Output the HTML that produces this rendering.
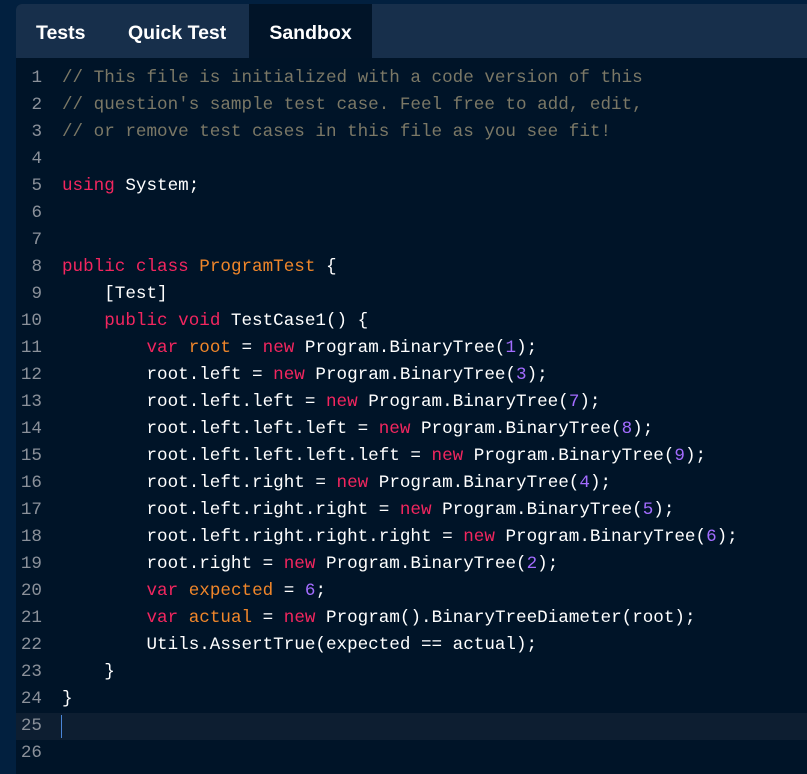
<!DOCTYPE html>
<html><head><style>
html,body{margin:0;padding:0;background:#02203f;width:807px;height:762px;overflow:hidden}
.panel{position:absolute;left:16px;top:4px;width:800px;height:770px;background:#001428;border-radius:6px 0 0 0;overflow:hidden}
.tabs{height:54px;background:#172f4b;position:relative;font-family:"Liberation Sans",sans-serif;font-weight:bold;font-size:19.5px;color:#fff}
.tab{position:absolute;top:2px;height:54px;line-height:54px}
.act{background:#011428;top:0;height:54px;line-height:58px;overflow:hidden}
.code{position:absolute;top:61px;left:0;right:0;font-family:"Liberation Mono",monospace;font-size:17.6px;color:#fff}
.ln{height:27px;line-height:27px;white-space:pre;position:relative}
.n{position:absolute;left:0;width:26px;text-align:right;color:#8b919a}
.t{position:absolute;left:46px}
.cur{background:#0d1e31}
.c{color:#7b7866}.k{color:#f2265f}.o{color:#f0862a}.m{color:#a36cff}
</style></head><body>
<div class="panel">
<div class="tabs">
<div class="tab" style="left:20px">Tests</div>
<div class="tab" style="left:112px">Quick Test</div>
<div class="tab act" style="left:233px;width:123px;text-align:center">Sandbox</div>
</div>
<div class="code">
<div class="ln"><span class="n">1</span><span class="t c">// This file is initialized with a code version of this</span></div>
<div class="ln"><span class="n">2</span><span class="t c">// question's sample test case. Feel free to add, edit,</span></div>
<div class="ln"><span class="n">3</span><span class="t c">// or remove test cases in this file as you see fit!</span></div>
<div class="ln"><span class="n">4</span></div>
<div class="ln"><span class="n">5</span><span class="t"><span class="k">using</span> System;</span></div>
<div class="ln"><span class="n">6</span></div>
<div class="ln"><span class="n">7</span></div>
<div class="ln"><span class="n">8</span><span class="t"><span class="k">public class</span> <span class="o">ProgramTest</span> {</span></div>
<div class="ln"><span class="n">9</span><span class="t">    [Test]</span></div>
<div class="ln"><span class="n">10</span><span class="t">    <span class="k">public void</span> TestCase1() {</span></div>
<div class="ln"><span class="n">11</span><span class="t">        <span class="k">var</span> <span class="o">root</span> = <span class="k">new</span> Program.BinaryTree(<span class="m">1</span>);</span></div>
<div class="ln"><span class="n">12</span><span class="t">        root.left = <span class="k">new</span> Program.BinaryTree(<span class="m">3</span>);</span></div>
<div class="ln"><span class="n">13</span><span class="t">        root.left.left = <span class="k">new</span> Program.BinaryTree(<span class="m">7</span>);</span></div>
<div class="ln"><span class="n">14</span><span class="t">        root.left.left.left = <span class="k">new</span> Program.BinaryTree(<span class="m">8</span>);</span></div>
<div class="ln"><span class="n">15</span><span class="t">        root.left.left.left.left = <span class="k">new</span> Program.BinaryTree(<span class="m">9</span>);</span></div>
<div class="ln"><span class="n">16</span><span class="t">        root.left.right = <span class="k">new</span> Program.BinaryTree(<span class="m">4</span>);</span></div>
<div class="ln"><span class="n">17</span><span class="t">        root.left.right.right = <span class="k">new</span> Program.BinaryTree(<span class="m">5</span>);</span></div>
<div class="ln"><span class="n">18</span><span class="t">        root.left.right.right.right = <span class="k">new</span> Program.BinaryTree(<span class="m">6</span>);</span></div>
<div class="ln"><span class="n">19</span><span class="t">        root.right = <span class="k">new</span> Program.BinaryTree(<span class="m">2</span>);</span></div>
<div class="ln"><span class="n">20</span><span class="t">        <span class="k">var</span> <span class="o">expected</span> = <span class="m">6</span>;</span></div>
<div class="ln"><span class="n">21</span><span class="t">        <span class="k">var</span> <span class="o">actual</span> = <span class="k">new</span> Program().BinaryTreeDiameter(root);</span></div>
<div class="ln"><span class="n">22</span><span class="t">        Utils.AssertTrue(expected == actual);</span></div>
<div class="ln"><span class="n">23</span><span class="t">    }</span></div>
<div class="ln"><span class="n">24</span><span class="t">}</span></div>
<div class="ln cur"><span class="n">25</span><span style="position:absolute;left:45px;top:2px;width:1px;height:23px;background:#4a86d8"></span></div>
<div class="ln"><span class="n">26</span></div>
</div>
</div>
</body></html>
